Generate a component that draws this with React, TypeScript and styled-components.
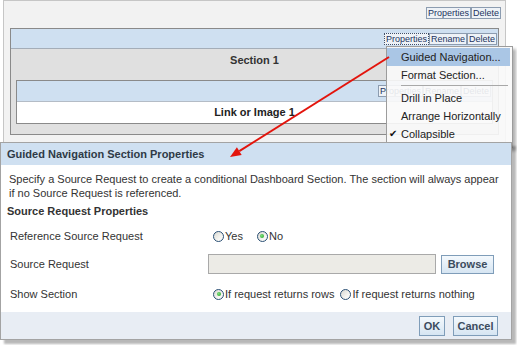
import React from "react";
import styled, { createGlobalStyle } from "styled-components";

const Global = createGlobalStyle`
  html, body { margin: 0; padding: 0; background: #ffffff; }
  body {
    font-family: "Liberation Sans", Arial, sans-serif;
    font-size: 11px;
    color: #333333;
  }
`;

const Stage = styled.div`
  position: relative;
  width: 517px;
  height: 345px;
  overflow: hidden;
  background: #ffffff;
`;

const PageBox = styled.div`
  margin-left: 3px;
  width: 503px;
  height: 150px;
  box-sizing: border-box;
  border: 1px solid #c6c6c6;
  background: #f2f2f2;
  display: flex;
  flex-direction: column;
`;

const Toolbar = styled.div`
  display: flex;
  justify-content: flex-end;
  padding: 6px 4px 0 0;
`;

const SmallButton = styled.span<{ $focus?: boolean }>`
  display: inline-flex;
  align-items: center;
  height: 12px;
  box-sizing: border-box;
  padding: 0 1px;
  border: 1px ${(p) => (p.$focus ? "dotted #40506a" : "solid #8c9cb0")};
  background: #eef2f7;
  font-size: 9px;
  line-height: 10px;
  color: #1d3460;
  white-space: nowrap;
`;

const Section = styled.div`
  margin: 9px 6px 0 6px;
  border: 1px solid #8a8a8a;
  background: #e0e0e0;
`;

const SectionHeader = styled.div`
  height: 19px;
  border-bottom: 1px solid #a4adb8;
  background: #cfe0f1;
  display: flex;
  justify-content: flex-end;
  align-items: center;
  padding-right: 1px;
`;

const SectionBody = styled.div`
  padding: 0 5px 10px 5px;
`;

const SectionTitle = styled.div`
  height: 22px;
  line-height: 22px;
  text-align: center;
  font-weight: bold;
  color: #333;
`;

const InnerBox = styled.div`
  margin-top: 9px;
  border: 1px solid #8a8a8a;
  background: #ffffff;
`;

const InnerHeader = styled.div`
  height: 20px;
  border-bottom: 1px solid #b4bcc6;
  background: #cfe0f1;
  display: flex;
  justify-content: flex-end;
  align-items: center;
  padding-right: 1px;
`;

const InnerBody = styled.div`
  height: 21px;
  line-height: 21px;
  text-align: center;
  font-weight: bold;
  color: #222;
`;

const Menu = styled.div`
  position: absolute;
  left: 386px;
  top: 46px;
  width: 127px;
  box-sizing: border-box;
  border: 1px solid #9c9c9c;
  background: rgba(250, 250, 250, 0.9);
  box-shadow: 3px 3px 3px rgba(0, 0, 0, 0.3);
  padding: 1px 0 4px 0;
`;

const MenuItem = styled.div<{ $active?: boolean }>`
  position: relative;
  height: 18px;
  line-height: 18px;
  padding-left: 14px;
  margin-right: 2px;
  background: ${(p) => (p.$active ? "#aac6e5" : "transparent")};
  color: #222;
  white-space: nowrap;
`;

const Check = styled.span`
  position: absolute;
  left: 2px;
  top: 0;
  font-family: "DejaVu Sans", sans-serif;
  font-size: 10px;
  color: #111;
`;

const MenuSeparator = styled.div`
  height: 1px;
  margin: 1px 4px 3px 14px;
  background: #a8a8a8;
`;

const Dialog = styled.div`
  position: absolute;
  left: 0;
  top: 142px;
  width: 512px;
  height: 198px;
  box-sizing: border-box;
  border: 1px solid #a3a3a3;
  background: #ffffff;
  box-shadow: 4px 4px 2px rgba(0, 0, 0, 0.28);
  display: flex;
  flex-direction: column;
`;

const DialogHeader = styled.div`
  height: 22px;
  line-height: 22px;
  padding-left: 6px;
  background: #cfe0f1;
  font-weight: bold;
  color: #2e3a46;
`;

const DialogBody = styled.div`
  flex: 1;
  padding: 7px 8px 2px 8px;
  display: flex;
  flex-direction: column;
`;

const Description = styled.p`
  margin: 0;
  line-height: 14px;
  color: #333;
  white-space: nowrap;
`;

const SubHeading = styled.div`
  margin: 4px 0 4px -2px;
  line-height: 14px;
  font-weight: bold;
  color: #333;
`;

const FormRow = styled.div<{ $h: number }>`
  display: grid;
  grid-template-columns: 199px 1fr;
  align-items: center;
  height: ${(p) => p.$h}px;
`;

const Label = styled.div`
  padding-left: 1px;
  color: #333;
`;

const Value = styled.div`
  display: flex;
  align-items: center;
`;

const RadioOption = styled.label<{ $gap: number }>`
  display: inline-flex;
  align-items: center;
  margin-left: ${(p) => p.$gap}px;
  color: #333;
`;

const RadioDot = styled.span<{ $checked?: boolean }>`
  position: relative;
  display: inline-block;
  width: 11px;
  height: 11px;
  box-sizing: border-box;
  border-radius: 50%;
  border: 1px solid #2a4f74;
  background: linear-gradient(135deg, #d8d8d2 0%, #f4f4f0 60%, #ffffff 100%);
  margin-right: 1px;
  &::after {
    content: "";
    display: ${(p) => (p.$checked ? "block" : "none")};
    position: absolute;
    left: 2.5px;
    top: 2.5px;
    width: 4px;
    height: 4px;
    border-radius: 50%;
    background: radial-gradient(circle at 40% 40%, #7ee07e, #1f9e1f);
  }
`;

const TextBox = styled.div`
  width: 228px;
  height: 20px;
  box-sizing: border-box;
  border: 1px solid #a9a9a9;
  background: #ecebe6;
`;

const ActionButton = styled.span<{ $w: number; $h?: number }>`
  display: inline-flex;
  justify-content: center;
  align-items: center;
  width: ${(p) => p.$w}px;
  height: ${(p) => p.$h ?? 20}px;
  box-sizing: border-box;
  border: 1px solid #7f9db9;
  background: linear-gradient(#f4f9fd, #d6e5f2);
  font-weight: bold;
  font-size: 11px;
  color: #3c4c5e;
`;

const BrowseButton = styled(ActionButton)`
  margin-left: 5px;
`;

const Footer = styled.div`
  height: 27px;
  background: #e8edf4;
  display: flex;
  justify-content: flex-end;
  align-items: center;
  gap: 8px;
  padding-right: 13px;
`;

const ArrowLayer = styled.svg`
  position: absolute;
  left: 0;
  top: 0;
  pointer-events: none;
`;

function Radio({ label, checked, gap }: { label: string; checked?: boolean; gap: number }) {
  return (
    <RadioOption $gap={gap}>
      <RadioDot $checked={checked} />
      {label}
    </RadioOption>
  );
}

export default function App() {
  return (
    <>
      <Global />
      <Stage>
        <PageBox>
          <Toolbar>
            <SmallButton>Properties</SmallButton>
            <SmallButton>Delete</SmallButton>
          </Toolbar>
          <Section>
            <SectionHeader>
              <SmallButton $focus>Properties</SmallButton>
              <SmallButton>Rename</SmallButton>
              <SmallButton>Delete</SmallButton>
            </SectionHeader>
            <SectionBody>
              <SectionTitle>Section 1</SectionTitle>
              <InnerBox>
                <InnerHeader>
                  <SmallButton>Properties</SmallButton>
                  <SmallButton>Rename</SmallButton>
                  <SmallButton>Delete</SmallButton>
                </InnerHeader>
                <InnerBody>Link or Image 1</InnerBody>
              </InnerBox>
            </SectionBody>
          </Section>
        </PageBox>

        <Menu>
          <MenuItem $active>Guided Navigation...</MenuItem>
          <MenuItem>Format Section...</MenuItem>
          <MenuSeparator />
          <MenuItem>Drill in Place</MenuItem>
          <MenuItem>Arrange Horizontally</MenuItem>
          <MenuItem>
            <Check>✔</Check>
            Collapsible
          </MenuItem>
        </Menu>

        <Dialog>
          <DialogHeader>Guided Navigation Section Properties</DialogHeader>
          <DialogBody>
            <Description>
              Specify a Source Request to create a conditional Dashboard Section. The section will always appear
              <br />
              if no Source Request is referenced.
            </Description>
            <SubHeading>Source Request Properties</SubHeading>
            <FormRow $h={28}>
              <Label>Reference Source Request</Label>
              <Value>
                <Radio label="Yes" gap={5} />
                <Radio label="No" gap={14} checked />
              </Value>
            </FormRow>
            <FormRow $h={28}>
              <Label>Source Request</Label>
              <Value>
                <TextBox />
                <BrowseButton $w={53} $h={19}>Browse</BrowseButton>
              </Value>
            </FormRow>
            <FormRow $h={32}>
              <Label>Show Section</Label>
              <Value>
                <Radio label="If request returns rows" gap={5} checked />
                <Radio label="If request returns nothing" gap={6} />
              </Value>
            </FormRow>
          </DialogBody>
          <Footer>
            <ActionButton $w={26}>OK</ActionButton>
            <ActionButton $w={45}>Cancel</ActionButton>
          </Footer>
        </Dialog>

        <ArrowLayer width={517} height={345} viewBox="0 0 517 345">
          <line x1={389} y1={57} x2={239.3} y2={151.1} stroke="#e3140c" strokeWidth={2} />
          <polygon points="230,157 241.7,154.9 236.9,147.3" fill="#e3140c" />
        </ArrowLayer>
      </Stage>
    </>
  );
}
